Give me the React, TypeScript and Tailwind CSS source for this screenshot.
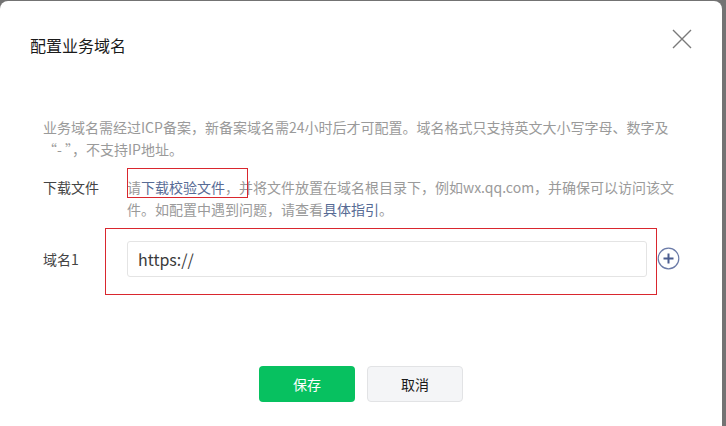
const font = { fontFamily: '"Microsoft YaHei", "Noto Sans CJK SC", "Liberation Sans", sans-serif' };

function PlusCircle() {
  return (
    <svg width="23" height="23" viewBox="0 0 23 23" className="shrink-0">
      <circle cx="11.5" cy="11.5" r="10.3" fill="none" stroke="#6b7ba8" strokeWidth="1.2" />
      <path d="M11.5 6.5v10M6.5 11.5h10" stroke="#4b5d8f" strokeWidth="2" strokeLinecap="butt" />
    </svg>
  );
}

function CloseIcon() {
  return (
    <svg width="20" height="20" viewBox="0 0 20 20">
      <path d="M1 1L19 19M19 1L1 19" stroke="#7a7a7a" strokeWidth="1.4" />
    </svg>
  );
}

export default function App() {
  return (
    <div className="h-[426px] w-[726px] overflow-hidden bg-[#737373] pt-px" style={font}>
      <div className="flex h-[432px] w-[722px] flex-col rounded-lg bg-white">
        {/* header */}
        <div className="flex items-start justify-between pl-[30px] pr-[30px] pt-[27px]">
          <h2 className="mt-[5px] text-[16px] leading-6 text-[#1a1a1a]">配置业务域名</h2>
          <button className="mt-px">
            <CloseIcon />
          </button>
        </div>

        {/* body */}
        <div className="pl-[43px] pr-[40px]">
          <p className="mt-[59px] w-[632px] text-[14px] leading-[22px] text-[#9a9a9a]">
            业务域名需经过ICP备案，新备案域名需24小时后才可配置。域名格式只支持英文大小写字母、数字及
            <br />
            “- ”，不支持IP地址。
          </p>

          <div className="mt-[16px] flex text-[14px] leading-[22px]">
            <div className="w-[84px] shrink-0 text-[#444]">下载文件</div>
            <p className="w-[560px] text-[#9a9a9a]">
              <span className="relative">
                请<a className="text-[#576b95]">下载校验文件</a>
                <span className="pointer-events-none absolute -top-[9px] left-0 h-[30px] w-[121px] border border-[#d9272e]" />
              </span>
              ，并将文件放置在域名根目录下，例如wx.qq.com，并确保可以访问该文
              <br />
              件。如配置中遇到问题，请查看<a className="text-[#576b95]">具体指引</a>。
            </p>
          </div>

          <div className="mt-[21px] flex items-center">
            <div className="w-[84px] shrink-0 text-[14px] text-[#444]">域名1</div>
            <div className="relative">
              <input
                defaultValue="https://"
                className="h-[36px] w-[520px] rounded-[3px] border border-[#e4e4e4] px-[10px] text-[16px] text-[#3a3a3a] outline-none"
                style={font}
              />
              <span className="pointer-events-none absolute -bottom-[18px] -left-[22px] -right-[10px] -top-[13px] border border-[#d9272e]" />
            </div>
            <div className="ml-[10px] -mt-[2px]">
              <PlusCircle />
            </div>
          </div>
        </div>

        {/* footer */}
        <div className="mt-[89px] flex justify-center gap-[12px]">
          <button className="h-[36px] w-[96px] rounded-[4px] bg-[#07c160] text-[14px] text-white">保存</button>
          <button className="h-[36px] w-[96px] rounded-[4px] border border-[#e2e3e5] bg-[#f4f5f7] text-[14px] text-[#1a1a1a]">
            取消
          </button>
        </div>
      </div>
    </div>
  );
}
